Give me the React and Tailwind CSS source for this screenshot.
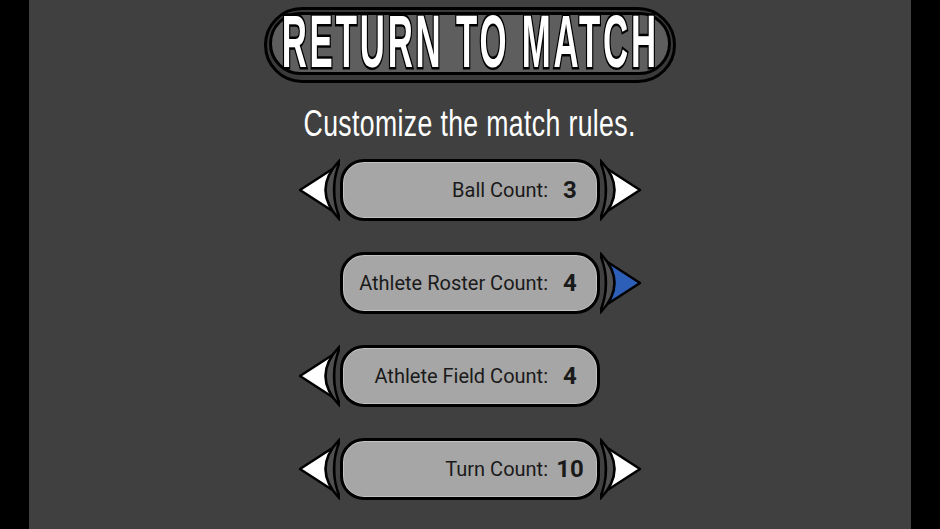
import React from "react";

const rules = [
  { label: "Ball Count:", value: "3", left: true, right: true },
  { label: "Athlete Roster Count:", value: "4", left: false, right: true, active: true },
  { label: "Athlete Field Count:", value: "4", left: true, right: false },
  { label: "Turn Count:", value: "10", left: true, right: true },
];

function Cap({ side = "left", show = true, color = "#ffffff" }) {
  return (
    <svg
      width="42"
      height="62"
      viewBox="0 0 42 62"
      className={`shrink-0 ${side === "right" ? "-scale-x-100" : ""} ${show ? "" : "invisible"}`}
    >
      <polygon
        points="2,31 36,9 36,53"
        fill={color}
        stroke="#000"
        strokeWidth="2.5"
        strokeLinejoin="round"
      />
      <path
        d="M43,0 Q12,31 43,62 Q29,31 43,0 Z"
        fill="#505050"
        stroke="#000"
        strokeWidth="2.5"
        strokeLinejoin="round"
      />
    </svg>
  );
}

function RuleRow({ rule }) {
  return (
    <div className="flex items-center">
      <Cap side="left" show={rule.left} />
      <div className="flex h-[62px] w-[260px] items-center justify-end rounded-[24px] border-[3px] border-black bg-[#a6a6a6] pr-[13px] shadow-[inset_0_0_0_1px_#c2c2c2] font-['Roboto',sans-serif] text-[#1a1a1a]">
        <span className="text-[20px] leading-none">{rule.label}</span>
        <span className="ml-[8px] w-[28px] text-center text-[24px] font-bold leading-none">
          {rule.value}
        </span>
      </div>
      <Cap side="right" show={rule.right} color={rule.active ? "#2d5fb8" : "#ffffff"} />
    </div>
  );
}

export default function App() {
  return (
    <div className="flex h-[529px] w-full justify-center overflow-hidden bg-black">
      <div className="flex h-full w-[882px] flex-col items-center bg-[#404040] pt-[7px]">
        {/* Title button */}
        <div className="h-[76px] w-[412px] rounded-full border-[3px] border-black bg-[#3a3a3a] p-[2px] pb-[5px]">
          <div className="flex h-full w-full items-center justify-center overflow-visible rounded-full border-[3px] border-black bg-[#5e5e5e] pb-[3px]">
            <span className="inline-block scale-x-[0.47] whitespace-nowrap font-['Liberation_Sans',sans-serif] text-[74px] font-bold leading-none tracking-[6px] text-white [-webkit-text-stroke:5px_black] [paint-order:stroke_fill]">
              RETURN TO MATCH
            </span>
          </div>
        </div>

        {/* Subtitle */}
        <div className="mt-[22px] flex w-full justify-center">
          <span className="inline-block scale-x-[0.72] whitespace-nowrap font-['Liberation_Sans',sans-serif] text-[37px] leading-none tracking-[0.5px] text-white">
            Customize the match rules.
          </span>
        </div>

        {/* Rules */}
        <div className="mt-[17px] flex flex-col gap-[31px]">
          {rules.map((r) => (
            <RuleRow key={r.label} rule={r} />
          ))}
        </div>
      </div>
    </div>
  );
}
